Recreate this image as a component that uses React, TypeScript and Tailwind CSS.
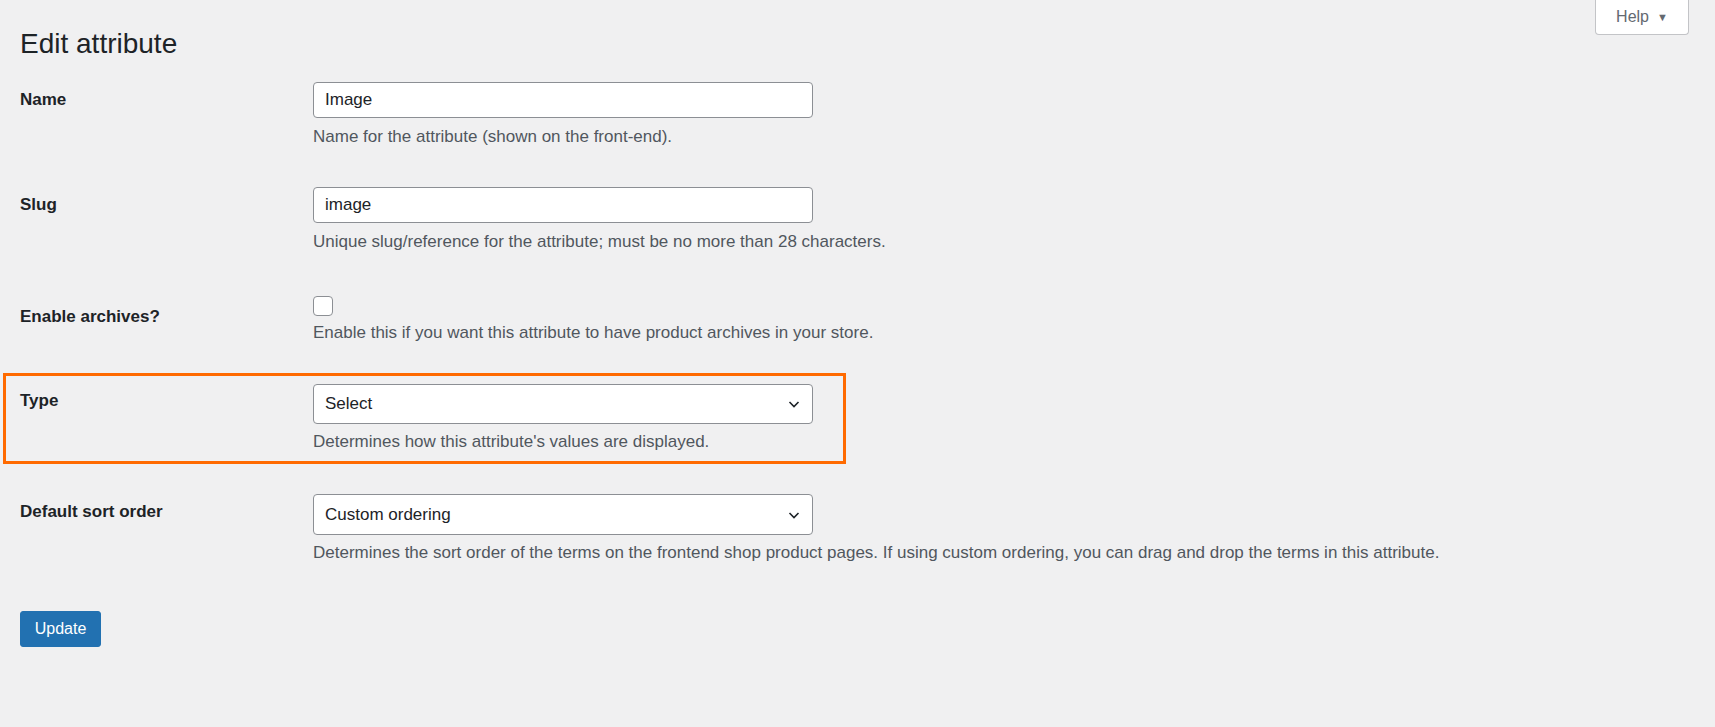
export default function App() {
  const font = { fontFamily: '"Liberation Sans", Arial, sans-serif' };
  const Chevron = () => (
    <svg width="16" height="16" viewBox="0 0 16 16" className="absolute right-[10px] top-1/2 -translate-y-1/2">
      <path d="M3.5 6 L8 10.5 L12.5 6" fill="none" stroke="#1d2327" strokeWidth="1.6" />
    </svg>
  );
  return (
    <div style={font} className="w-[1715px] h-[727px] bg-[#f0f0f1] text-[#1d2327] relative overflow-hidden">
      <div className="absolute right-[26px] top-0 w-[94px] h-[35px] bg-white border border-t-0 border-[#c3c4c7] rounded-b-[4px] flex items-center justify-center gap-2 text-[16px] text-[#646970]">
        Help <span className="text-[11px]">▼</span>
      </div>
      <div className="pl-[20px] pt-[27px]">
        <h1 className="text-[28px] leading-[34px] font-normal">Edit attribute</h1>
        <div className="flex mt-[21px]">
          <div className="w-[293px] text-[17px] leading-[22px] font-bold pt-[7px]">Name</div>
          <div>
            <div className="w-[500px] h-[36px] bg-white border border-[#8c8f94] rounded-[4px] px-[11px] flex items-center text-[17px]">Image</div>
            <div className="mt-[8px] text-[17px] leading-[22px] text-[#50575e]">Name for the attribute (shown on the front-end).</div>
          </div>
        </div>
        <div className="flex mt-[39px]">
          <div className="w-[293px] text-[17px] leading-[22px] font-bold pt-[7px]">Slug</div>
          <div>
            <div className="w-[500px] h-[36px] bg-white border border-[#8c8f94] rounded-[4px] px-[11px] flex items-center text-[17px]">image</div>
            <div className="mt-[8px] text-[17px] leading-[22px] text-[#50575e]">Unique slug/reference for the attribute; must be no more than 28 characters.</div>
          </div>
        </div>
        <div className="flex mt-[43px]">
          <div className="w-[293px] text-[17px] leading-[22px] font-bold pt-[10px]">Enable archives?</div>
          <div>
            <div className="w-[20px] h-[20px] bg-white border border-[#8c8f94] rounded-[4px]"></div>
            <div className="mt-[6px] text-[17px] leading-[22px] text-[#50575e]">Enable this if you want this attribute to have product archives in your store.</div>
          </div>
        </div>
        <div className="-ml-[17px] mt-[29px] w-[843px] h-[91px] border-[3px] border-[#ff6a00] pl-[14px] pt-[8px] flex">
          <div className="w-[293px] text-[17px] leading-[22px] font-bold pt-[6px]">Type</div>
          <div>
            <div className="relative w-[500px] h-[40px] bg-white border border-[#8c8f94] rounded-[4px] px-[11px] flex items-center text-[17px]">Select<Chevron /></div>
            <div className="mt-[7px] text-[17px] leading-[22px] text-[#50575e]">Determines how this attribute's values are displayed.</div>
          </div>
        </div>
        <div className="flex mt-[30px]">
          <div className="w-[293px] text-[17px] leading-[22px] font-bold pt-[7px]">Default sort order</div>
          <div>
            <div className="relative w-[500px] h-[41px] bg-white border border-[#8c8f94] rounded-[4px] px-[11px] flex items-center text-[17px]">Custom ordering<Chevron /></div>
            <div className="mt-[7px] text-[17px] leading-[22px] text-[#50575e]">Determines the sort order of the terms on the frontend shop product pages. If using custom ordering, you can drag and drop the terms in this attribute.</div>
          </div>
        </div>
        <button className="mt-[47px] w-[81px] h-[36px] bg-[#2271b1] border border-[#2271b1] rounded-[3px] text-white text-[16px]">Update</button>
      </div>
    </div>
  );
}
